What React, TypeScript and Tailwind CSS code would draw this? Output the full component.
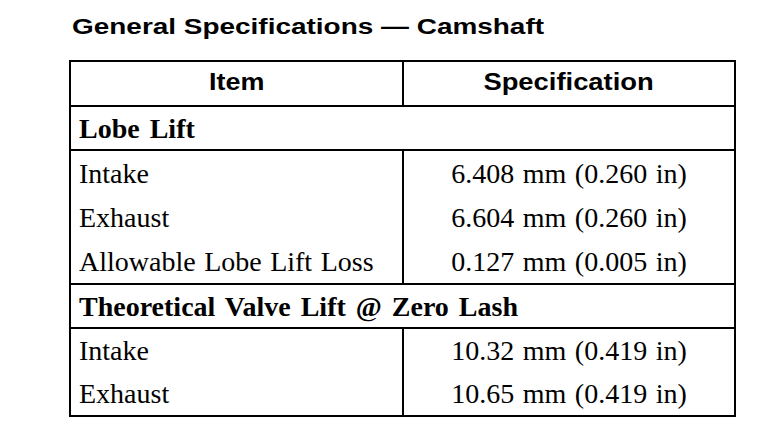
const sans = '[font-family:"Liberation_Sans",Arial,sans-serif]';

type Row = { item: string; spec: string };

const lobeLift: Row[] = [
  { item: 'Intake', spec: '6.408 mm (0.260 in)' },
  { item: 'Exhaust', spec: '6.604 mm (0.260 in)' },
  { item: 'Allowable Lobe Lift Loss', spec: '0.127 mm (0.005 in)' },
];

const valveLift: Row[] = [
  { item: 'Intake', spec: '10.32 mm (0.419 in)' },
  { item: 'Exhaust', spec: '10.65 mm (0.419 in)' },
];

function Section({ title }: { title: string }) {
  return (
    <div className="flex h-[44px] items-center border-b-2 border-black pl-[8px] text-[28px] font-bold leading-[31px] [word-spacing:3px]">
      {title}
    </div>
  );
}

function Group({ rows, height, last }: { rows: Row[]; height: string; last?: boolean }) {
  return (
    <div className={`grid grid-cols-[331px_1fr] ${last ? '' : 'border-b-2 border-black'}`}>
      <div className="flex flex-col">
        {rows.map((r) => (
          <div key={r.item} className={`flex ${height} items-center pl-[8px]`}>
            {r.item}
          </div>
        ))}
      </div>
      <div className="flex flex-col border-l-2 border-black">
        {rows.map((r) => (
          <div key={r.spec} className={`flex ${height} items-center justify-center`}>
            {r.spec}
          </div>
        ))}
      </div>
    </div>
  );
}

export default function App() {
  return (
    <div className="min-h-screen w-[768px] bg-white pl-[69px] text-black">
      {/* Title — the source font is a wide Helvetica, so stretch it */}
      <h1 className={`${sans} ml-[3px] pt-[16px] text-[22px] font-bold leading-[22px]`}>
        <span className="inline-block origin-left scale-x-[1.27] whitespace-nowrap">
          General Specifications — Camshaft
        </span>
      </h1>

      {/* Spec table */}
      <div className="mt-[22px] w-[667px] border-2 border-black font-['Liberation_Serif',serif] text-[28px] leading-[31px] [word-spacing:1.5px]">
        <div className={`${sans} grid h-[45px] grid-cols-[331px_1fr] border-b-2 border-black text-[23px] font-bold leading-[26px] [word-spacing:0px]`}>
          <div className="flex items-center justify-center pb-[4px]">
            <span className="inline-block scale-x-[1.17]">Item</span>
          </div>
          <div className="flex items-center justify-center border-l-2 border-black pb-[4px]">
            <span className="inline-block scale-x-[1.19]">Specification</span>
          </div>
        </div>

        <Section title="Lobe Lift" />
        <Group rows={lobeLift} height="h-[44px]" />

        <Section title="Theoretical Valve Lift @ Zero Lash" />
        <Group rows={valveLift} height="h-[43px]" last />
      </div>
    </div>
  );
}
